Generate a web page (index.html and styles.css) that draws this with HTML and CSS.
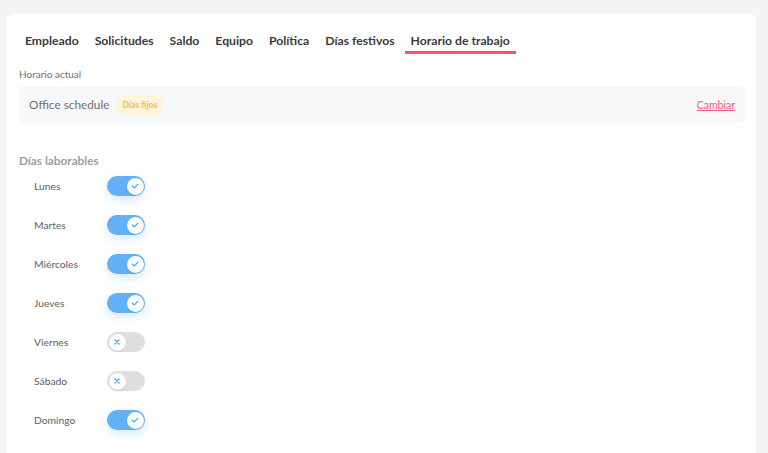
FILE: index.html
```html
<!DOCTYPE html>
<html lang="es">
<head>
    <meta charset="UTF-8">
    <meta name="viewport" content="width=device-width, initial-scale=1.0">
    <title>Horario de trabajo</title>
    <link rel="stylesheet" href="styles.css">
</head>
<body>
    <div class="card">
        <nav class="tabs">
            <a class="tab">Empleado</a>
            <a class="tab">Solicitudes</a>
            <a class="tab">Saldo</a>
            <a class="tab">Equipo</a>
            <a class="tab">Política</a>
            <a class="tab">Días festivos</a>
            <a class="tab active">Horario de trabajo</a>
        </nav>

        <div class="label">Horario actual</div>
        <div class="schedule">
            <span class="schedule-name">Office schedule</span>
            <span class="badge">Días fijos</span>
            <a class="change" href="#">Cambiar</a>
        </div>

        <div class="section-title">Días laborables</div>
        <div class="days">
            <div class="day"><span class="day-name">Lunes</span><span class="toggle on"><span class="knob"><svg viewBox="0 0 10 10"><path d="M2.8 5.2 L4.4 6.6 L7.3 3.6"/></svg></span></span></div>
            <div class="day"><span class="day-name">Martes</span><span class="toggle on"><span class="knob"><svg viewBox="0 0 10 10"><path d="M2.8 5.2 L4.4 6.6 L7.3 3.6"/></svg></span></span></div>
            <div class="day"><span class="day-name">Miércoles</span><span class="toggle on"><span class="knob"><svg viewBox="0 0 10 10"><path d="M2.8 5.2 L4.4 6.6 L7.3 3.6"/></svg></span></span></div>
            <div class="day"><span class="day-name">Jueves</span><span class="toggle on"><span class="knob"><svg viewBox="0 0 10 10"><path d="M2.8 5.2 L4.4 6.6 L7.3 3.6"/></svg></span></span></div>
            <div class="day"><span class="day-name">Viernes</span><span class="toggle"><span class="knob"><svg viewBox="0 0 10 10"><path d="M3.3 3.3 L6.7 6.7 M6.7 3.3 L3.3 6.7"/></svg></span></span></div>
            <div class="day"><span class="day-name">Sábado</span><span class="toggle"><span class="knob"><svg viewBox="0 0 10 10"><path d="M3.3 3.3 L6.7 6.7 M6.7 3.3 L3.3 6.7"/></svg></span></span></div>
            <div class="day"><span class="day-name">Domingo</span><span class="toggle on"><span class="knob"><svg viewBox="0 0 10 10"><path d="M2.8 5.2 L4.4 6.6 L7.3 3.6"/></svg></span></span></div>
        </div>
    </div>
</body>
</html>
```

FILE: styles.css
```css
body {
    font-family: 'Lato', 'Noto Sans', sans-serif;
    background: #f5f5f5;
    color: #333;
    margin: 0;
    padding: 14px 12px 0 7px;
    height: 453px;
    box-sizing: border-box;
    overflow: hidden;
}
.card {
    background: #fff;
    border-radius: 6px 6px 0 0;
    padding: 20px 11px 40px 12px;
    min-height: 460px;
    box-sizing: border-box;
}
.tabs {
    display: flex;
}
.tab {
    font-size: 12.2px;
    font-weight: bold;
    color: #3a3a3a;
    padding: 0 6px 3px 6px;
    margin-right: 4px;
    border-bottom: 3px solid transparent;
    line-height: 14px;
}
.tab.active {
    border-bottom-color: #f2546f;
}
.label {
    font-size: 10px;
    color: #707070;
    margin: 14px 0 6px 0;
}
.schedule {
    display: flex;
    align-items: center;
    background: #f7f8fa;
    border-radius: 5px;
    height: 37px;
    padding: 0 10px;
}
.schedule-name {
    font-size: 11.8px;
    color: #6f6f6f;
}
.badge {
    margin-left: 7px;
    background: #fff5db;
    color: #f5c13c;
    font-size: 8.6px;
    font-weight: bold;
    padding: 5px 6px;
    border-radius: 9px;
}
.change {
    margin-left: auto;
    color: #f45a83;
    font-size: 10.5px;
    text-decoration: underline;
}
.section-title {
    font-size: 11.8px;
    font-weight: bold;
    color: #9d9d9d;
    margin: 30px 0 8px 0;
}
.days {
    display: flex;
    flex-direction: column;
    gap: 19px;
    padding-left: 15px;
}
.day {
    display: flex;
    align-items: center;
    height: 20px;
}
.day-name {
    width: 73px;
    font-size: 10.3px;
    color: #606060;
}
.toggle {
    width: 38px;
    height: 20px;
    border-radius: 10px;
    background: #dfdfdf;
    display: flex;
    align-items: center;
    padding: 0 1.5px;
    box-sizing: border-box;
}
.toggle.on {
    background: #62b1f6;
    justify-content: flex-end;
    box-shadow: 0 4px 10px rgba(98, 177, 246, 0.25);
}
.knob {
    width: 17px;
    height: 17px;
    border-radius: 50%;
    background: #fbfcfe;
    display: flex;
    align-items: center;
    justify-content: center;
    box-shadow: 0 1px 2px rgba(0, 0, 0, 0.1);
}
.knob svg {
    width: 12px;
    height: 12px;
    fill: none;
    stroke: #4a9ff0;
    stroke-width: 1;
    stroke-linecap: round;
    stroke-linejoin: round;
}
```
